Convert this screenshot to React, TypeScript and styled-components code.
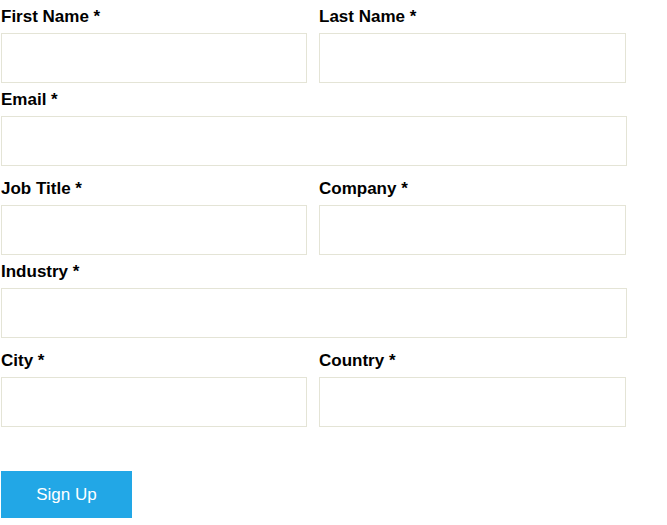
import React from "react";
import styled, { createGlobalStyle } from "styled-components";

const Global = createGlobalStyle`
  html, body { margin: 0; padding: 0; background: #fff; }
  body { font-family: "Liberation Sans", Arial, sans-serif; }
  * { box-sizing: border-box; }
`;

const Form = styled.form`
  padding: 6px 0 0 1px;
  width: 667px;
`;

const Row = styled.div<{ $full?: boolean }>`
  display: grid;
  grid-template-columns: ${(p) => (p.$full ? "626px" : "306px 307px")};
  column-gap: 12px;
  margin-bottom: ${(p) => (p.$full ? "12px" : "6px")};
`;

const Field = styled.div`
  display: flex;
  flex-direction: column;
`;

const Label = styled.label`
  display: block;
  font-size: 17px;
  font-weight: bold;
  line-height: 20px;
  color: #000;
  padding-top: 1px;
  margin-bottom: 6px;
`;

const Input = styled.input`
  display: block;
  width: 100%;
  height: 50px;
  border: 1px solid #e4e4d6;
  background: #fff;
  margin: 0;
  padding: 0 8px;
  font-family: "Liberation Sans", Arial, sans-serif;
  font-size: 15px;
  outline: none;
`;

const Actions = styled.div`
  padding-top: 38px;
`;

const Button = styled.button`
  display: block;
  width: 131px;
  height: 47px;
  border: none;
  background: #22a7e6;
  color: #fff;
  font-family: "Liberation Sans", Arial, sans-serif;
  font-size: 17px;
  padding: 0;
  cursor: pointer;
`;

type F = { label: string; type?: string };

const rows: { full?: boolean; fields: F[] }[] = [
  { fields: [{ label: "First Name *" }, { label: "Last Name *" }] },
  { full: true, fields: [{ label: "Email *", type: "email" }] },
  { fields: [{ label: "Job Title *" }, { label: "Company *" }] },
  { full: true, fields: [{ label: "Industry *" }] },
  { fields: [{ label: "City *" }, { label: "Country *" }] },
];

export default function App() {
  return (
    <>
      <Global />
      <Form onSubmit={(e) => e.preventDefault()}>
        {rows.map((r, i) => (
          <Row key={i} $full={r.full}>
            {r.fields.map((f) => (
              <Field key={f.label}>
                <Label>{f.label}</Label>
                <Input type={f.type || "text"} />
              </Field>
            ))}
          </Row>
        ))}
        <Actions>
          <Button type="submit">Sign Up</Button>
        </Actions>
      </Form>
    </>
  );
}
